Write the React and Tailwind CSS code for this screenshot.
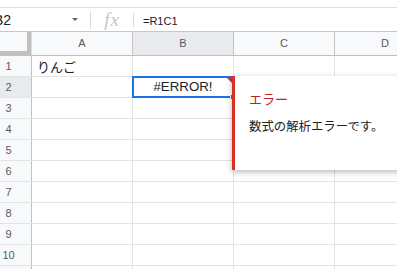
import React from "react";

const rows = [1, 2, 3, 4, 5, 6, 7, 8, 9, 10, 11];

function Cell({ children, className = "" }) {
  return (
    <div className={`w-[101px] shrink-0 h-full border-r border-[#e2e3e3] ${className}`}>{children}</div>
  );
}

export default function App() {
  return (
    <div className="w-[397px] h-[269px] overflow-hidden bg-white font-['Liberation_Sans','Noto_Sans_CJK_JP',sans-serif] text-[#202124]">
      <div className="-ml-[14px] w-[420px] relative">
        {/* top strip */}
        <div className="h-[8px] border-b border-[#e0e0e0]" />
        {/* formula bar */}
        <div className="h-[24px] border-b border-[#c7c7c7] flex items-center">
          <div className="w-[104px] h-full flex items-center shrink-0">
            <span className="pl-[8px] text-[14px] leading-none pt-[1px]">B2</span>
            <div className="ml-auto mr-[12px] w-0 h-0 border-l-[3px] border-r-[3px] border-t-[3px] border-l-transparent border-r-transparent border-t-[#5f6368]" />
          </div>
          <div className="w-px h-[18px] bg-[#dadce0] shrink-0" />
          <div className="w-[42px] h-full flex items-center justify-center shrink-0">
            <span className="font-['Liberation_Serif',serif] italic text-[19px] leading-none text-[#c4c7c5] tracking-[1px]">fx</span>
          </div>
          <div className="w-px h-[14px] bg-[#dadce0] shrink-0" />
          <span className="pl-[9px] text-[11px] leading-none pt-[3px]">=R1C1</span>
        </div>
        {/* column header */}
        <div className="h-[24px] flex border-b border-[#c0c0c0] bg-[#f8f9fa]">
          <div className="w-[46px] shrink-0 h-full flex">
            <div className="w-[41px] h-full flex flex-col">
              <div className="flex-1" />
              <div className="h-[4px] bg-[#c0c0c0]" />
            </div>
            <div className="w-[4px] h-full bg-[#c0c0c0]" />
            <div className="w-px h-full bg-[#dadce0]" />
          </div>
          {["A", "B", "C", "D"].map((c) => (
            <div
              key={c}
              className={`w-[101px] shrink-0 h-full border-r border-[#c4c4c4] flex items-center justify-center text-[11px] text-[#575a5e] ${c === "B" ? "bg-[#e8eaed]" : ""}`}
            >
              {c}
            </div>
          ))}
        </div>
        {/* rows */}
        {rows.map((r) => (
          <div key={r} className="h-[21px] flex border-b border-[#e2e3e3]">
            <div
              className={`w-[46px] shrink-0 h-full border-r border-[#c0c0c0] flex items-center justify-center text-[11px] text-[#575a5e] ${r === 2 ? "bg-[#e8eaed]" : "bg-[#f8f9fa]"}`}
            >
              {r}
            </div>
            <Cell className="flex items-center pl-[5px]">
              {r === 1 ? (
                <span className="font-['Noto_Sans_CJK_JP',sans-serif] text-[13px] leading-none">りんご</span>
              ) : null}
            </Cell>
            <Cell className="relative flex items-center justify-center">
              {r === 2 ? (
                <>
                  <span className="text-[13.3px] leading-none">#ERROR!</span>
                  <div className="absolute -left-px -top-px -right-px -bottom-px border-2 border-[#1a73e8]" />
                  <div className="absolute right-[1px] top-[1px] w-0 h-0 border-t-[5px] border-l-[5px] border-t-[#d93025] border-l-transparent" />
                  <div className="absolute -right-[3px] -bottom-[3px] w-[6px] h-[6px] bg-[#1a73e8] border border-white" />
                </>
              ) : null}
            </Cell>
            <Cell />
            <Cell />
          </div>
        ))}
        {/* error tooltip */}
        <div className="absolute left-[246px] top-[76px] w-[180px] h-[94px] bg-white border-l-[3px] border-[#d93025] shadow-[0_2px_6px_rgba(0,0,0,0.28)] pl-[14px] pt-[16px] font-['Noto_Sans_CJK_JP',sans-serif]">
          <div className="text-[13px] leading-[14px] text-[#c5221f]">エラー</div>
          <div className="mt-[13px] text-[12.4px] leading-[14px] text-[#202124]">数式の解析エラーです。</div>
        </div>
      </div>
    </div>
  );
}
